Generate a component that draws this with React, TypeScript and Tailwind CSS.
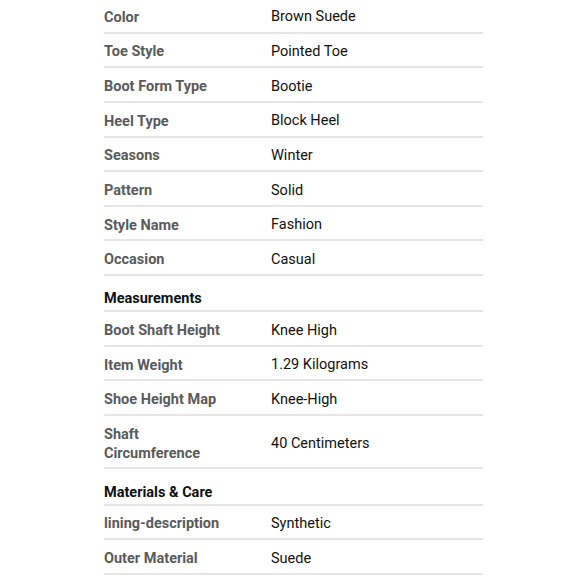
import React from "react";

type Row = { kind: "row"; label: string; value: string; h?: string } | { kind: "head"; label: string; h?: string };

const rows: Row[] = [
  { kind: "row", label: "Color", value: "Brown Suede" },
  { kind: "row", label: "Toe Style", value: "Pointed Toe" },
  { kind: "row", label: "Boot Form Type", value: "Bootie" },
  { kind: "row", label: "Heel Type", value: "Block Heel" },
  { kind: "row", label: "Seasons", value: "Winter" },
  { kind: "row", label: "Pattern", value: "Solid" },
  { kind: "row", label: "Style Name", value: "Fashion" },
  { kind: "row", label: "Occasion", value: "Casual" },
  { kind: "head", label: "Measurements" },
  { kind: "row", label: "Boot Shaft Height", value: "Knee High" },
  { kind: "row", label: "Item Weight", value: "1.29 Kilograms" },
  { kind: "row", label: "Shoe Height Map", value: "Knee-High" },
  { kind: "row", label: "Shaft Circumference", value: "40 Centimeters", h: "tall" },
  { kind: "head", label: "Materials & Care" },
  { kind: "row", label: "lining-description", value: "Synthetic" },
  { kind: "row", label: "Outer Material", value: "Suede" },
];

export default function App() {
  return (
    <div
      className="w-[580px] h-[580px] overflow-hidden bg-white"
      style={{ fontFamily: "Roboto, 'Noto Sans', sans-serif" }}
    >
      <div className="ml-[104px] w-[379px] mt-[-1px] flex flex-col">
        {rows.map((r, i) =>
          r.kind === "head" ? (
            <div
              key={i}
              className="h-[36.2px] flex items-end pb-[0px] border-b-2 border-[#e6e6e6] text-[14.5px] leading-[22px] font-bold text-[#0f1111]"
            >
              {r.label}
            </div>
          ) : (
            <div
              key={i}
              className={`${r.h === "tall" ? "h-[53.3px]" : "h-[34.64px]"} flex items-center pt-[4px] border-b-2 border-[#e6e6e6]`}
            >
              <div className="w-[167px] pr-[42px] text-[14.5px] leading-[19px] font-bold text-[#595b5b]">
                {r.label}
              </div>
              <div className="text-[14.5px] text-[#0f1111]">{r.value}</div>
            </div>
          )
        )}
      </div>
    </div>
  );
}
